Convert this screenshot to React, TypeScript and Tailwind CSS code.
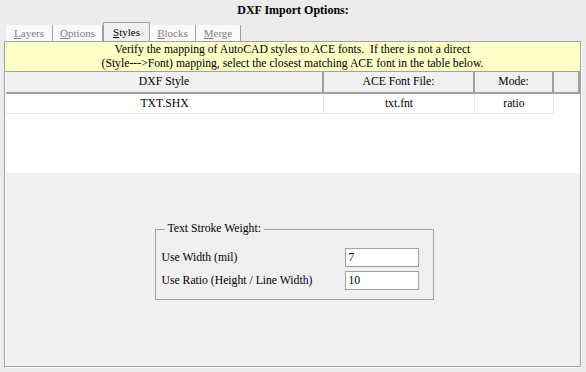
const tabs = [
  { key: 'L', rest: 'ayers', w: 'w-[47px]', active: false },
  { key: 'O', rest: 'ptions', w: 'w-[50px]', active: false },
  { key: 'S', rest: 'tyles', w: 'w-[47px]', active: true },
  { key: 'B', rest: 'locks', w: 'w-[46px]', active: false },
  { key: 'M', rest: 'erge', w: 'w-[45px]', active: false },
]

function Tab({ k, rest, w, active }: { k: string; rest: string; w: string; active: boolean }) {
  if (active) {
    return (
      <div className={`${w} flex h-[19px] items-center justify-center border-x border-t border-[#a0a0a0] bg-[#f0f0f0] pt-[1px] text-black`}>
        <span>
          <span className="underline underline-offset-1">{k}</span>
          {rest}
        </span>
      </div>
    )
  }
  return (
    <div className={`${w} flex h-[16px] items-center justify-center border-r border-[#a0a0a0] bg-[#fafafa] text-[#808080]`}>
      <span>
        <span className="underline underline-offset-1">{k}</span>
        {rest}
      </span>
    </div>
  )
}

export default function App() {
  return (
    <div className="h-[372px] w-[586px] overflow-hidden bg-[#ececec] font-[Liberation_Serif,Times_New_Roman,serif] text-[11.7px] text-black">
      <div className="flex h-[22px] items-center justify-center pb-[3px] text-[12px] font-bold">DXF Import Options:</div>

      <div className="flex h-[19px] items-end pl-[6px] text-[11px]">
        {tabs.map((t) => (
          <Tab key={t.key} k={t.key} rest={t.rest} w={t.w} active={t.active} />
        ))}
      </div>

      <div className="mx-[4px] h-[327px] border-t border-l border-r border-b border-t-[#a0a0a0] border-l-[#a0a0a0] border-r-white border-b-white">
        <div className="flex h-full flex-col border-r border-b border-[#a0a0a0] bg-[#f0f0f0]">
          <div className="h-[30px] border-b border-[#a0a0a0] bg-[#ffffc8] pt-[1px] text-center leading-[14px]">
            <div>Verify the mapping of AutoCAD styles to ACE fonts.&nbsp; If there is not a direct</div>
            <div>(Style---&gt;Font) mapping, select the closest matching ACE font in the table below.</div>
          </div>

          <div className="h-[101px] border-l border-white bg-white">
            <div className="flex h-[22px] bg-[#f0f0f0]">
              <div className="flex w-[318px] items-center justify-center border-r-2 border-b-2 border-[#a0a0a0]">DXF Style</div>
              <div className="flex w-[151px] items-center justify-center border-r-2 border-b-2 border-[#a0a0a0]">ACE Font File:</div>
              <div className="flex w-[79px] items-center justify-center border-r-2 border-b-2 border-[#a0a0a0]">Mode:</div>
              <div className="w-[26px] border-r-2 border-b-2 border-[#a0a0a0]" />
            </div>
            <div className="flex h-[20px]">
              <div className="flex w-[318px] items-center justify-center border-r border-b border-[#e8e8e8]">TXT.SHX</div>
              <div className="flex w-[151px] items-center justify-center border-r border-b border-[#e8e8e8]">txt.fnt</div>
              <div className="flex w-[79px] items-center justify-center border-r border-b border-[#e8e8e8]">ratio</div>
            </div>
          </div>

          <div className="flex flex-1 justify-center border-l border-white pt-[56px]">
            <div className="relative ml-[2px] h-[71px] w-[279px] border border-[#a0a0a0] px-[6px] pt-[16px]">
              <span className="absolute -top-[8px] left-[9px] bg-[#f0f0f0] px-[3px] leading-[14px]">Text Stroke Weight:</span>
              <div className="flex h-[23px] items-center justify-between">
                <span>Use Width (mil)</span>
                <div className="mr-[8px] flex h-[19px] w-[74px] items-center border border-[#a0a0a0] bg-white px-[3px]">7</div>
              </div>
              <div className="flex h-[23px] items-center justify-between">
                <span>Use Ratio (Height / Line Width)</span>
                <div className="mr-[8px] flex h-[19px] w-[74px] items-center border border-[#a0a0a0] bg-white px-[3px]">10</div>
              </div>
            </div>
          </div>
        </div>
      </div>
    </div>
  )
}
